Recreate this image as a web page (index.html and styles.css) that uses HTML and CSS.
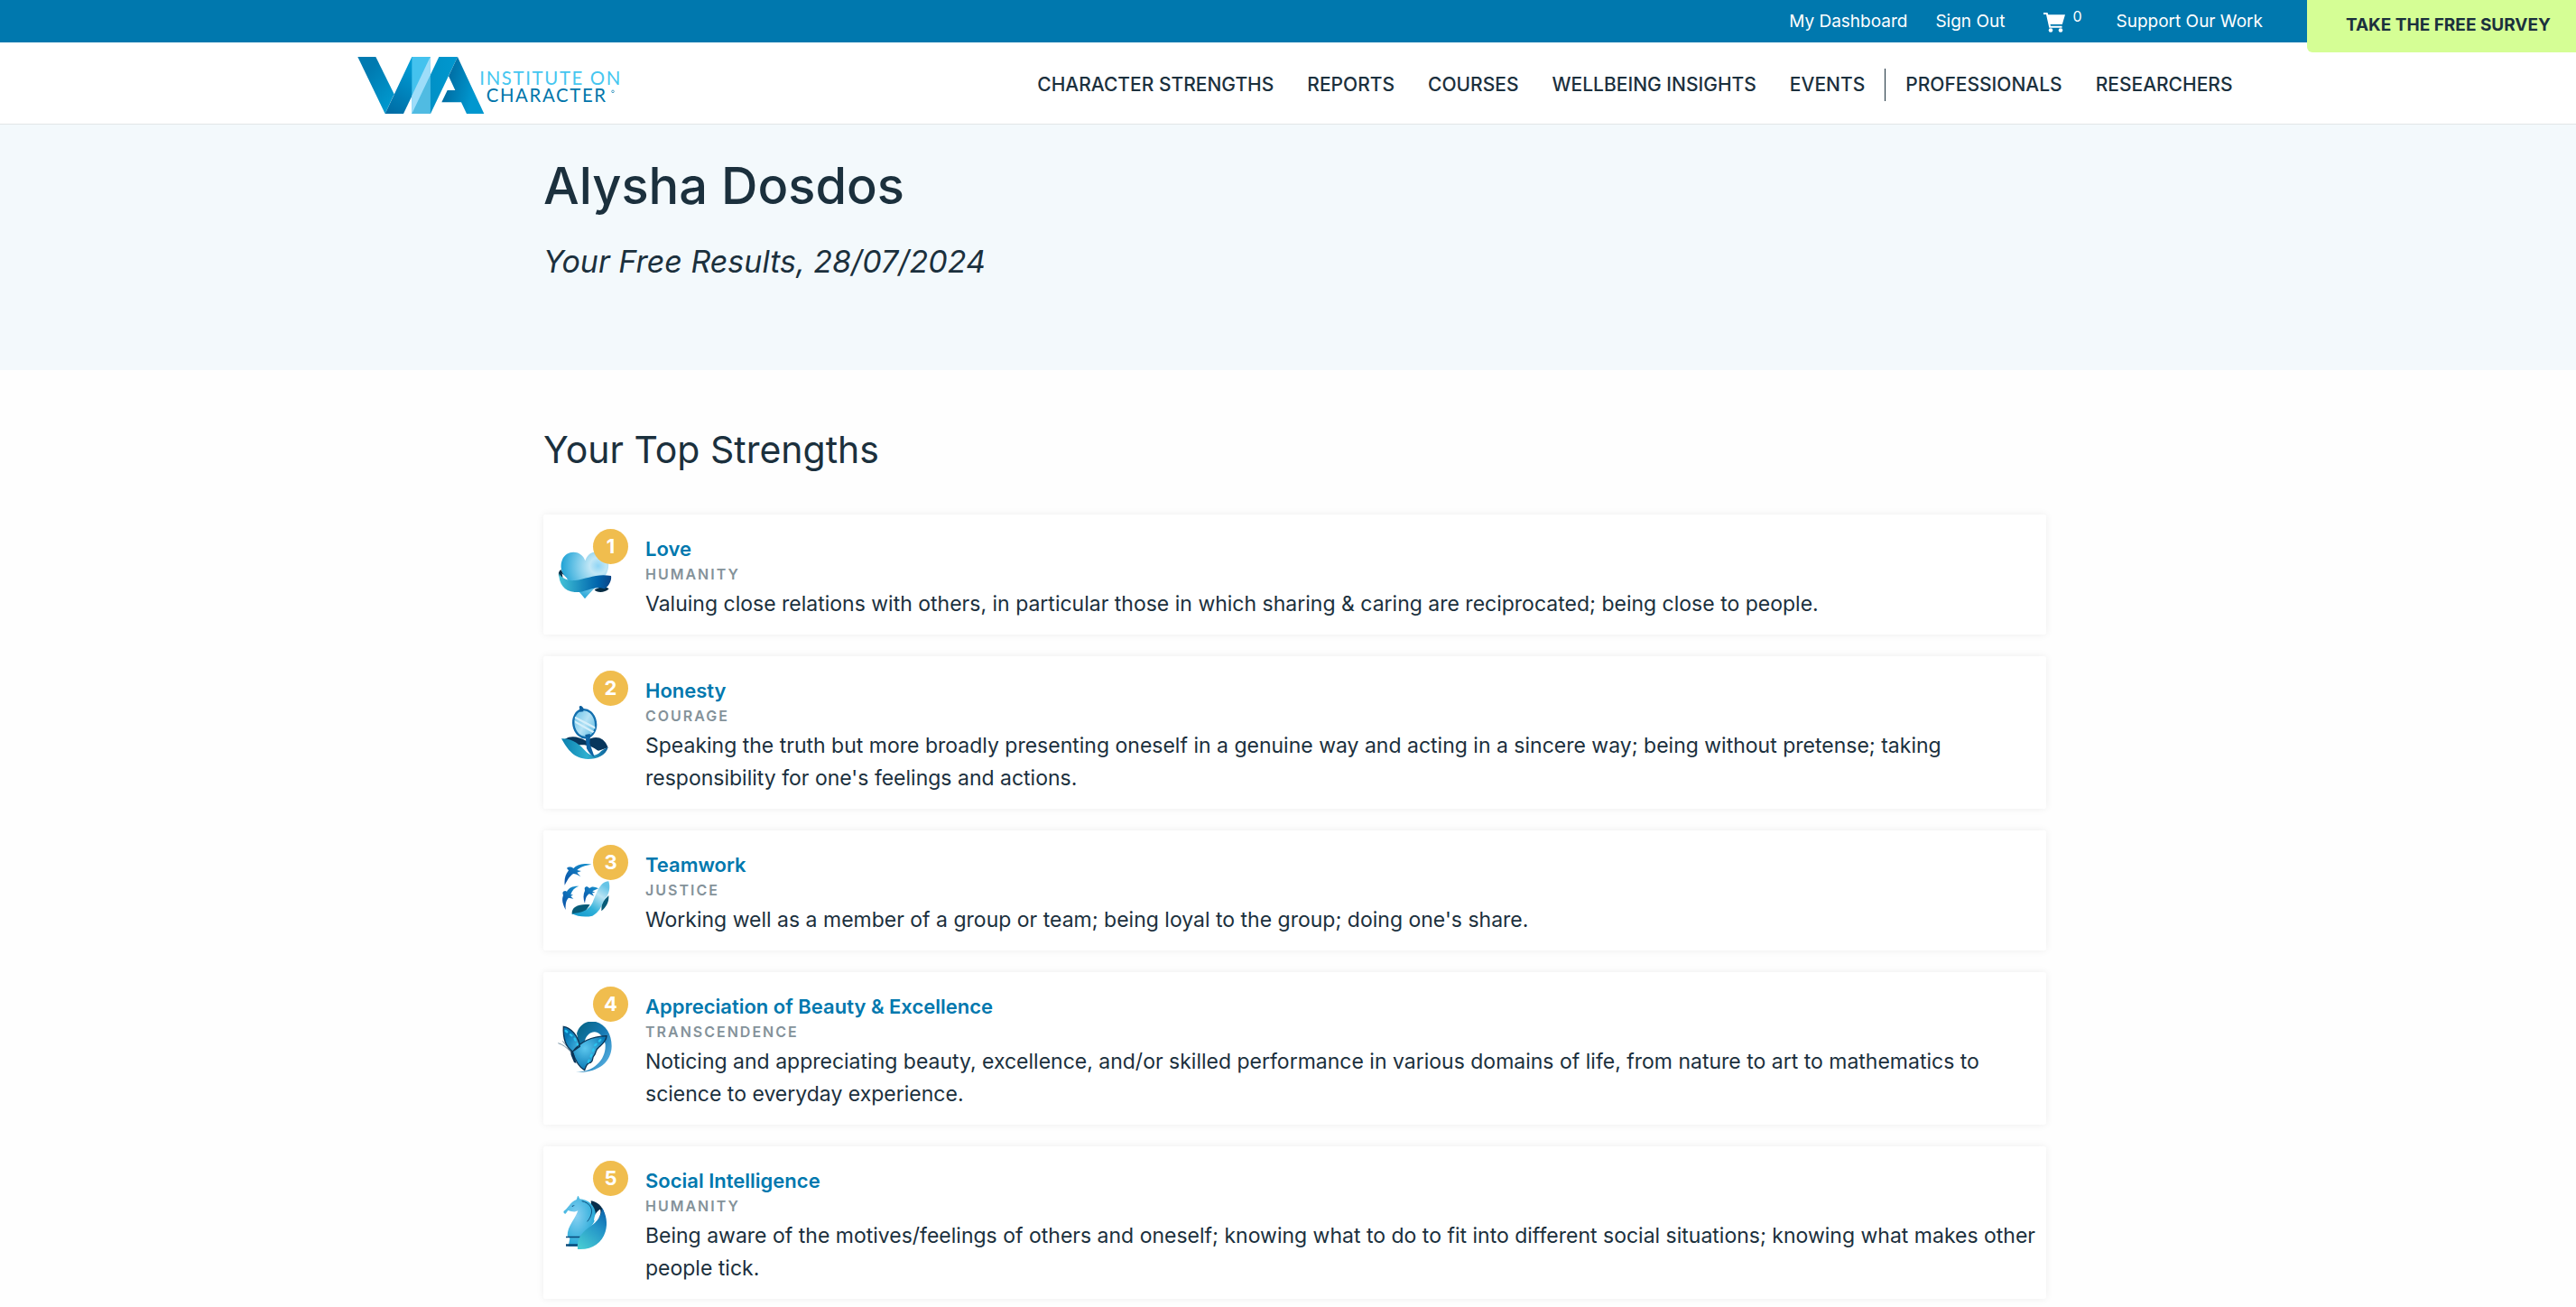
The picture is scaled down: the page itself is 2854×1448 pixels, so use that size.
FILE: index.html
```html
<!DOCTYPE html>
<html lang="en">
<head>
<meta charset="utf-8">
<title>Your Free Results | VIA Institute on Character</title>
<link rel="stylesheet" href="styles.css">
</head>
<body>
<div class="page">
  <div class="topbar">
    <nav class="utility" aria-label="Account">
      <a href="#">My Dashboard</a>
      <a href="#">Sign Out</a>
      <a class="cart" href="#" aria-label="Cart">
        <svg class="cart-icon" viewBox="0 0 24 22"><path fill="#fff" d="M0 0h4.500l.8 2.200H24L20.800 13H7.500l.5 1.800h12.500v2H6.300L3 2H0z"/><circle cx="8" cy="19.500" r="2.300" fill="#fff"/><circle cx="19" cy="19.500" r="2.300" fill="#fff"/></svg>
        <span class="cart-count">0</span>
      </a>
      <a href="#">Support Our Work</a>
    </nav>
    <a class="survey" href="#">TAKE THE FREE SURVEY</a>
  </div>

  <header class="header">
    <div class="header-inner">
      <a class="logo-link" href="#" aria-label="VIA Institute on Character">
        <svg class="logo" viewBox="45 66 882 195">
          <defs>
            <linearGradient id="lv1" x1="0" y1="0" x2=".7" y2="1"><stop offset=".3" stop-color="#007ab0"/><stop offset="1" stop-color="#0099cf"/></linearGradient>
            <linearGradient id="lv2" x1=".2" y1="1" x2=".6" y2=".2"><stop offset="0" stop-color="#006ea6"/><stop offset="1" stop-color="#0099d2"/></linearGradient>
            <linearGradient id="la1" x1="0" y1="0" x2="1" y2="0"><stop offset="0" stop-color="#008cc0"/><stop offset="1" stop-color="#0098d0"/></linearGradient>
            <linearGradient id="la2" x1="0" y1=".4" x2="1" y2=".7"><stop offset="0" stop-color="#00659a"/><stop offset=".75" stop-color="#0097cf"/></linearGradient>
          </defs>
          <path fill="url(#lv1)" d="M46 69h60l61 124-30 65z"/>
          <path fill="url(#lv2)" d="M226 69h62l-90 189h-61z"/>
          <path fill="url(#la1)" d="M316 69h62l-90 189h-62z"/>
          <path fill="url(#la2)" d="M378 69l88 189h-58l-18-38h-65l19-40h26l-22-47z"/>
          <path fill="#44c2ee" d="M226 69h61v189h-61z"/>
          <path fill="#50bbe2" d="M287 130v128h-61z"/>
          <path fill="#9eddf9" d="M287 69v61l-61 128v-60z"/>
          <text class="logo-light" x="451" y="162">INSTITUTE ON</text>
          <text class="logo-dark" x="473" y="220">CHARACTER</text>
          <circle cx="894" cy="184" r="4" fill="none" stroke="#0079ad" stroke-width="2"/>
        </svg>
      </a>
      <nav class="mainnav" aria-label="Main">
        <a href="#">CHARACTER STRENGTHS</a>
        <a href="#">REPORTS</a>
        <a href="#">COURSES</a>
        <a href="#">WELLBEING INSIGHTS</a>
        <a href="#">EVENTS</a>
        <span class="divider"></span>
        <a href="#">PROFESSIONALS</a>
        <a href="#">RESEARCHERS</a>
      </nav>
    </div>
  </header>

  <section class="hero">
    <div class="content">
      <h1>Alysha Dosdos</h1>
      <p class="subtitle">Your Free Results, 28/07/2024</p>
    </div>
  </section>

  <main class="content results">
    <h2>Your Top Strengths</h2>
    <ol class="strengths">
      <li class="card">
        <svg class="icon" viewBox="54 113 180 180">
          <defs>
            <radialGradient id="h1" cx=".78" cy=".3" r=".8"><stop offset="0" stop-color="#8fd5f5"/><stop offset=".22" stop-color="#c2e7f6"/><stop offset=".55" stop-color="#7bcbea"/><stop offset="1" stop-color="#1aa0d4"/></radialGradient>
            <linearGradient id="h2"><stop offset="0" stop-color="#45c4d8"/><stop offset=".45" stop-color="#1889bd"/><stop offset=".75" stop-color="#0064ac"/><stop offset="1" stop-color="#0b4486"/></linearGradient>
          </defs>
          <path fill="#062c44" d="M64 185c-8 6-9 16-6 22l24 12-8-18zM176 252c6 11 34 12 48-3l-18-10z"/>
          <path fill="url(#h1)" d="M145 156c-12-37-62-38-76-4-8 20-4 38 6 52 17 25 43 44 69 78 28-36 57-54 73-86 14-29 2-66-31-70-20-1-34 10-41 30z"/>
          <path fill="#fff" d="M68 198l18 18-14 6z"/>
          <path fill="url(#h2)" d="M58 197c8 16 28 27 53 24 42-5 70-24 120-15 3 14-7 34-21 43-38-13-63 14-100 11-35-2-54-30-52-63z"/>
        </svg>
        <span class="badge">1</span>
        <div class="text">
          <a class="name" href="#">Love</a>
          <div class="virtue">HUMANITY</div>
          <p>Valuing close relations with others, in particular those in which sharing &amp; caring are reciprocated; being close to people.</p>
        </div>
      </li>
      <li class="card">
        <svg class="icon" viewBox="54 158 180 180">
          <defs>
            <linearGradient id="m1"><stop offset="0" stop-color="#0a7fae"/><stop offset=".55" stop-color="#2fb0d0"/><stop offset="1" stop-color="#0b5e98"/></linearGradient>
            <linearGradient id="m2" x1="0" y1="0" x2="1" y2="1"><stop offset="0" stop-color="#5ebde6"/><stop offset=".5" stop-color="#b5e2f5"/><stop offset="1" stop-color="#4db4e0"/></linearGradient>
          </defs>
          <path fill="#07365c" d="M78 268c18-12 44-9 70 6 26-17 58-18 73 23l-32 10-34-16-40 4z"/>
          <path fill="#fff" d="M116 292c18-10 50-2 66 12l8 18h-44z"/>
          <path fill="url(#m1)" d="M66 267c40-1 61 21 82 43 13 12 27 18 44 5 9-11 17-14 29-19-7 26-36 39-67 39-45-1-67-30-88-68z"/>
          <path fill="#0c62a3" d="M146 258h16l-2 24 16 46c-11-4-20-15-26-28z"/>
          <ellipse cx="143" cy="217" rx="37" ry="47" transform="rotate(-10 143 217)" fill="url(#m2)" stroke="#136fae" stroke-width="7"/>
          <path fill="#d5effa" d="M112 193l66 34v8l-68-36zM110 207l65 36-5 5-58-33z"/>
          <path fill="#0c5f9d" d="M125 160l6-3 8 8v12l-11 1zM145 254l16-3 2 12h-17z"/>
        </svg>
        <span class="badge">2</span>
        <div class="text">
          <a class="name" href="#">Honesty</a>
          <div class="virtue">COURAGE</div>
          <p>Speaking the truth but more broadly presenting oneself in a genuine way and acting in a sincere way; being without pretense; taking responsibility for one's feelings and actions.</p>
        </div>
      </li>
      <li class="card">
        <svg class="icon" viewBox="54 113 180 180">
          <defs>
            <linearGradient id="t1" x1="0" y1="1" x2="1" y2="0"><stop offset="0" stop-color="#0a4ea4"/><stop offset="1" stop-color="#1794cf"/></linearGradient>
            <linearGradient id="t2" x1="0" y1="1" x2=".7" y2="0"><stop offset="0" stop-color="#0d95cb"/><stop offset=".4" stop-color="#31b1d9"/><stop offset=".75" stop-color="#b9e4f4"/><stop offset="1" stop-color="#66c4e6"/></linearGradient>
          </defs>
          <g fill="url(#t1)">
            <path d="M166 115c-25-5-48-1-60 13-8-6-18-5-22 0l6 7c-11 13-15 30-13 49 10-20 18-32 29-38 7 0 12 3 24 10l-12-14 14-5-14-3c11-11 26-16 48-19z"/>
            <path d="M124 187c-20-1-33 5-40 18-6-4-12-1-14 5l2 8c-6 15-1 30 8 48-1-21 2-32 10-40l16 3-9-8 8-5-8-1c4-14 13-23 27-28z"/>
            <path d="M189 195c-13-7-22-8-30-1-6-7-13-7-16 0l1 8c-6 13-6 27 0 43 2-18 6-28 15-32l15 7-6-10 10-1-9-5z"/>
          </g>
          <path fill="#075b78" d="M101 280c-2-25 24-35 60-31l-22 31zM200 240c4-7 14-10 23-22 2 23-9 40-24 52z"/>
          <path fill="url(#t2)" d="M223 171c6 19 4 43-17 67-8 18-14 35-37 48-24 6-50 2-69-8 29-1 57-9 70-37 13-29 22-68 53-70z"/>
        </svg>
        <span class="badge">3</span>
        <div class="text">
          <a class="name" href="#">Teamwork</a>
          <div class="virtue">JUSTICE</div>
          <p>Working well as a member of a group or team; being loyal to the group; doing one's share.</p>
        </div>
      </li>
      <li class="card">
        <svg class="icon" viewBox="54 158 180 180">
          <defs>
            <linearGradient id="b1" x1="0" y1="0" x2="1" y2="1"><stop offset="0" stop-color="#05617f"/><stop offset=".5" stop-color="#177bb5"/><stop offset="1" stop-color="#6cc0ee"/></linearGradient>
            <radialGradient id="b2"><stop offset="0" stop-color="#5cc7ee"/><stop offset="1" stop-color="#0878b5"/></radialGradient>
          </defs>
          <path fill="url(#b1)" d="M117 197c6-24 25-40 52-41 41 4 64 40 64 83-1 53-42 89-119 87 62-1 101-44 98-93-6-34-34-54-56-33-15 13-14 31-10 48l-20-8z"/>
          <path fill="url(#b2)" stroke="#0b3556" stroke-width="4" d="M73 174c24 4 49 29 54 66l-24 17c-24-16-32-48-30-83zM103 258c24-32 58-51 113-53-1 18-14 27-26 38-14 10-6 18-16 28-7 8-1 16-10 22-13 2-16 12-21 26-15-8-31-33-40-61z"/>
          <path fill="#0a3458" d="M96 253l10 8 10 35-8-3-10-24z"/>
          <path fill="none" stroke="#37617a" stroke-width="2" d="M98 257L70 222M96 257c-13-13-24-23-41-28"/>
          <path stroke="#28c5f0" stroke-width="7" stroke-linecap="round" stroke-dasharray="6 14" fill="none" d="M80 188l28 22 12 24M196 218l-20 20-8 26-16 36"/>
        </svg>
        <span class="badge">4</span>
        <div class="text">
          <a class="name" href="#">Appreciation of Beauty &amp; Excellence</a>
          <div class="virtue">TRANSCENDENCE</div>
          <p>Noticing and appreciating beauty, excellence, and/or skilled performance in various domains of life, from nature to art to mathematics to science to everyday experience.</p>
        </div>
      </li>
      <li class="card">
        <svg class="icon" viewBox="54 163 180 180">
          <defs>
            <radialGradient id="k1" cx=".4" cy=".4" r=".7"><stop offset="0" stop-color="#86d0f2"/><stop offset="1" stop-color="#16a3d3"/></radialGradient>
            <linearGradient id="k2" x1=".2" y1="1" x2=".8" y2="0"><stop offset="0" stop-color="#46c9d2"/><stop offset=".6" stop-color="#2495c8"/><stop offset="1" stop-color="#0c66ad"/></linearGradient>
          </defs>
          <path fill="#062d4a" d="M164 179c20 2 39 19 44 40l-38 30z"/>
          <path fill="url(#k1)" d="M116 175L121 161L127 173C154 174 180 194 180 228C179 252 165 262 154 275L130 330H89L94 304L86 296C86 262 110 244 121 212C110 219 98 213 88 211L80 222C75 222 72 218 74 213C88 205 94 184 116 175z"/>
          <path fill="none" stroke="#0c5080" stroke-width="3" d="M134 180c26 6 35 23 32 40-3 14-8 20-14 28"/>
          <path fill="#0a4a7a" d="M81 297h48v5H81zM81 323h48v7H81zM100 196l11-3-8 6z"/>
          <path fill="#fff" d="M174 246c1-19 8-32 21-39 4 14 0 28-21 39z"/>
          <path fill="url(#k2)" d="M201 203c14 21 20 53 11 79-12 37-43 61-92 58-3-31 9-51 33-69 24-17 45-32 48-68z"/>
        </svg>
        <span class="badge">5</span>
        <div class="text">
          <a class="name" href="#">Social Intelligence</a>
          <div class="virtue">HUMANITY</div>
          <p>Being aware of the motives/feelings of others and oneself; knowing what to do to fit into different social situations; knowing what makes other people tick.</p>
        </div>
      </li>
    </ol>
  </main>
</div>
</body>
</html>
```

FILE: styles.css
```css
* { box-sizing: border-box; }

body {
  margin: 0;
  background: #fefefe;
  color: #1b303d;
  font-family: Inter, "Liberation Sans", sans-serif;
  font-size: 23px;
  overflow-x: hidden;
}

a { color: inherit; text-decoration: none; }

/* The page runs a little wider than the window, under the scrollbar. */
.page { width: calc(100% + 15px); }

.topbar {
  display: flex;
  justify-content: flex-end;
  align-items: flex-start;
  height: 47px;
  background: #0078ae;
}

.utility {
  display: flex;
  align-items: center;
  gap: 31px;
  height: 47px;
  margin-right: 49px;
  color: #fff;
  font-size: 19px;
}

.cart {
  display: flex;
  align-items: flex-start;
  gap: 8px;
  margin: 0 7px 0 12px;
}

.cart-icon { width: 24px; height: 22px; margin-top: 4px; }
.cart-count { font-size: 16px; line-height: 16px; margin-bottom: 12px; }

.survey {
  position: relative;
  z-index: 1;
  height: 58px;
  padding: 0 43px;
  background: #d5fe95;
  border-bottom-left-radius: 6px;
  color: #1b303d;
  font-size: 19px;
  font-weight: 700;
  line-height: 56px;
}

.header {
  background: #fff;
  border-bottom: 1px solid #e2e5e7;
}

.header-inner {
  display: flex;
  justify-content: space-between;
  align-items: center;
  max-width: 2078px;
  height: 90px;
  margin: 0 auto;
  padding-top: 4px;
}

.logo-link { display: block; }
.logo { display: block; width: 294px; height: 65px; }

.logo-light, .logo-dark {
  font-family: Lato, sans-serif;
  font-size: 61px;
  letter-spacing: 5px;
}
.logo-light { fill: #45c6f0; }
.logo-dark { fill: #0075aa; }

.mainnav {
  display: flex;
  align-items: center;
  gap: 37px;
  font-size: 21px;
  font-weight: 500;
  line-height: 36px;
}

.divider {
  width: 1px;
  height: 36px;
  margin: 0 -15px;
  background: #1b303d;
}

.content {
  max-width: 1665px;
  margin: 0 auto;
}

.hero {
  min-height: 272px;
  padding-top: 32px;
  background: #f3f9fc;
}

h1 {
  margin: 0;
  font-size: 56px;
  font-weight: 500;
  line-height: 72px;
}

.subtitle {
  margin: 24px 0 0;
  font-size: 34px;
  font-style: italic;
  line-height: 48px;
}

.results { padding: 60px 0 24px; }

h2 {
  margin: 0 0 44px;
  font-size: 41px;
  font-weight: 400;
  line-height: 56px;
}

.strengths {
  display: flex;
  flex-direction: column;
  gap: 24px;
  margin: 0;
  padding: 0;
  list-style: none;
}

.card {
  position: relative;
  display: flex;
  align-items: center;
  gap: 37px;
  padding: 24px 8px 16px 16px;
  background: #fff;
  border-radius: 2px;
  box-shadow: 0 0 8px rgba(0, 0, 0, 0.07);
}

.icon { flex: none; width: 60px; height: 60px; margin-top: -8px; }

.badge {
  position: absolute;
  top: 16px;
  left: 55px;
  width: 39px;
  height: 39px;
  border-radius: 50%;
  background: #f0bd4e;
  color: #fff;
  font-size: 22px;
  font-weight: 700;
  line-height: 39px;
  text-align: center;
}

.name {
  display: block;
  color: #0078ae;
  font-size: 22px;
  font-weight: 600;
  line-height: 28px;
}

.virtue {
  color: #84929a;
  font-size: 16px;
  font-weight: 600;
  letter-spacing: 2px;
  line-height: 29px;
}

.text p { margin: 0; line-height: 36px; }
```
